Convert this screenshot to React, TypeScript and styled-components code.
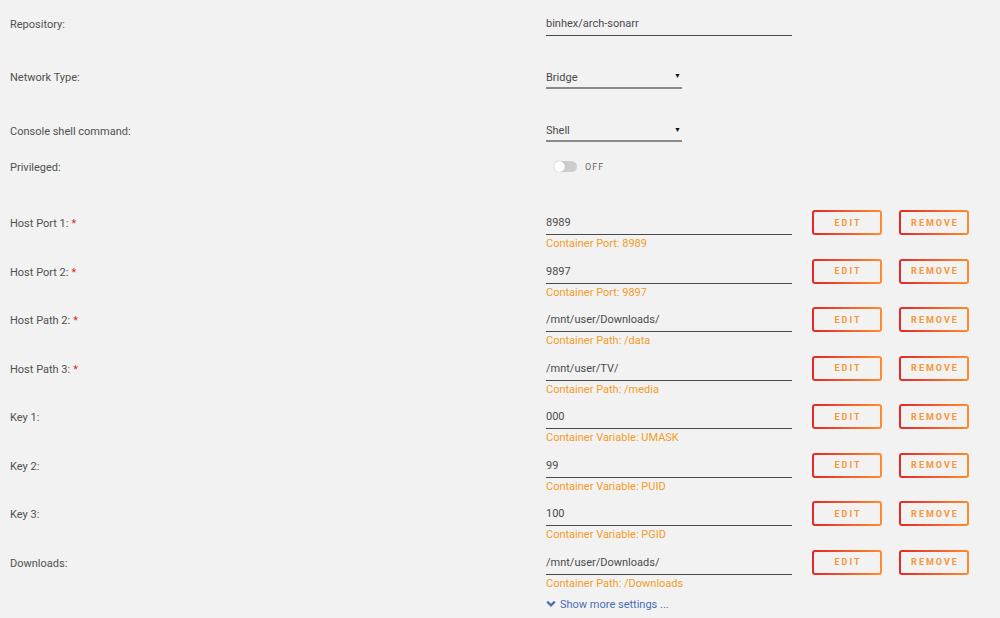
import React from "react"
import styled, { createGlobalStyle } from "styled-components"

const GlobalStyle = createGlobalStyle`
  html, body {
    margin: 0;
    background: #f2f2f2;
  }
  body {
    font-family: Roboto, "Liberation Sans", sans-serif;
    font-size: 11px;
    color: #505050;
  }
`

type Mapping = {
  label: string
  value: string
  note: string
  required?: boolean
}

const mappings: Mapping[] = [
  { label: "Host Port 1:", value: "8989", note: "Container Port: 8989", required: true },
  { label: "Host Port 2:", value: "9897", note: "Container Port: 9897", required: true },
  { label: "Host Path 2:", value: "/mnt/user/Downloads/", note: "Container Path: /data", required: true },
  { label: "Host Path 3:", value: "/mnt/user/TV/", note: "Container Path: /media", required: true },
  { label: "Key 1:", value: "000", note: "Container Variable: UMASK" },
  { label: "Key 2:", value: "99", note: "Container Variable: PUID" },
  { label: "Key 3:", value: "100", note: "Container Variable: PGID" },
  { label: "Downloads:", value: "/mnt/user/Downloads/", note: "Container Path: /Downloads" }
]

export default function App() {
  return (
    <>
      <GlobalStyle />
      <Form>
        <Row $mb={28}>
          <Label>Repository:</Label>
          <TextField>binhex/arch-sonarr</TextField>
        </Row>
        <Row $mb={29}>
          <Label>Network Type:</Label>
          <Select>
            Bridge
            <Caret>▼</Caret>
          </Select>
        </Row>
        <Row $mb={12}>
          <Label $h={24}>Console shell command:</Label>
          <Select $h={24}>
            Shell
            <Caret>▼</Caret>
          </Select>
        </Row>
        <Row $mb={32}>
          <Label $h={24}>Privileged:</Label>
          <SwitchWrap>
            <Track>
              <Knob />
            </Track>
            <SwitchText>OFF</SwitchText>
          </SwitchWrap>
        </Row>
        {mappings.map(m => (
          <Row key={m.label} $mb={9.5}>
            <Label>
              {m.label}
              {m.required && <Req>*</Req>}
            </Label>
            <Field>
              <TextField>{m.value}</TextField>
              <Note>{m.note}</Note>
            </Field>
            <Actions>
              <GradButton>Edit</GradButton>
              <GradButton>Remove</GradButton>
            </Actions>
          </Row>
        ))}
        <Row $mb={0}>
          <Label $h={14} />
          <MoreLink>
            <svg width="10" height="8" viewBox="0 0 10 8">
              <path d="M1.2 1.6 L5 5.4 L8.8 1.6" fill="none" stroke="#486dba" strokeWidth="2.2" />
            </svg>
            Show more settings ...
          </MoreLink>
        </Row>
      </Form>
    </>
  )
}

const Form = styled.div`
    padding: 11px 0 0 10px;
    display: flex;
    flex-direction: column;
  `,
  Row = styled.div<{ $mb: number }>`
    display: flex;
    align-items: flex-start;
    margin-bottom: ${p => p.$mb}px;
  `,
  Label = styled.div<{ $h?: number }>`
    width: 536px;
    flex-shrink: 0;
    box-sizing: border-box;
    height: ${p => p.$h ?? 25}px;
    padding-top: 1px;
    line-height: ${p => (p.$h ?? 25) + 1}px;
    color: #505050;
  `,
  Req = styled.span`
    color: #e22828;
    margin-left: 3px;
  `,
  Field = styled.div`
    display: flex;
    flex-direction: column;
    width: 246px;
  `,
  TextField = styled.div`
    width: 246px;
    height: 23px;
    padding-top: 1px;
    line-height: 24px;
    border-bottom: 1px solid #4a4a4a;
    color: #4a4a4a;
    box-sizing: content-box;
  `,
  Select = styled.div<{ $h?: number }>`
    position: relative;
    width: 136px;
    box-sizing: border-box;
    height: ${p => p.$h ?? 25}px;
    padding-top: 1px;
    line-height: ${p => p.$h ?? 25}px;
    border-bottom: 2px solid #8a8a8a;
    color: #4a4a4a;
  `,
  Caret = styled.span`
    position: absolute;
    right: 1px;
    top: 0;
    font-size: 7px;
    color: #111;
  `,
  Note = styled.div`
    height: 14px;
    line-height: 17px;
    color: #f39c26;
  `,
  SwitchWrap = styled.div`
    display: flex;
    align-items: center;
    height: 24px;
    padding: 1px 0 0 8px;
    box-sizing: border-box;
    gap: 8px;
  `,
  Track = styled.div`
    width: 23px;
    height: 11px;
    border-radius: 6px;
    background: #cccccc;
    position: relative;
  `,
  Knob = styled.div`
    position: absolute;
    left: 0;
    top: 0;
    width: 11px;
    height: 11px;
    border-radius: 50%;
    background: #ffffff;
    box-shadow: 0 0 1px rgba(0, 0, 0, 0.35);
  `,
  SwitchText = styled.span`
    font-size: 9px;
    letter-spacing: 1px;
    color: #666;
  `,
  Actions = styled.div`
    display: flex;
    gap: 17px;
    margin-left: 20px;
  `,
  GradButton = styled.button`
    width: 70px;
    height: 25px;
    padding: 0 0 0 2px;
    border: 2px solid transparent;
    border-radius: 3px;
    background:
      linear-gradient(#f2f2f2, #f2f2f2) padding-box,
      linear-gradient(90deg, #e22828, #ff8c2f) border-box;
    color: #f79635;
    font-family: Roboto, "Liberation Sans", sans-serif;
    font-size: 9px;
    font-weight: 700;
    letter-spacing: 2px;
    text-transform: uppercase;
    cursor: pointer;
  `,
  MoreLink = styled.a`
    display: flex;
    align-items: center;
    gap: 4px;
    height: 14px;
    margin-top: -1px;
    color: #486dba;
    cursor: pointer;
  `
